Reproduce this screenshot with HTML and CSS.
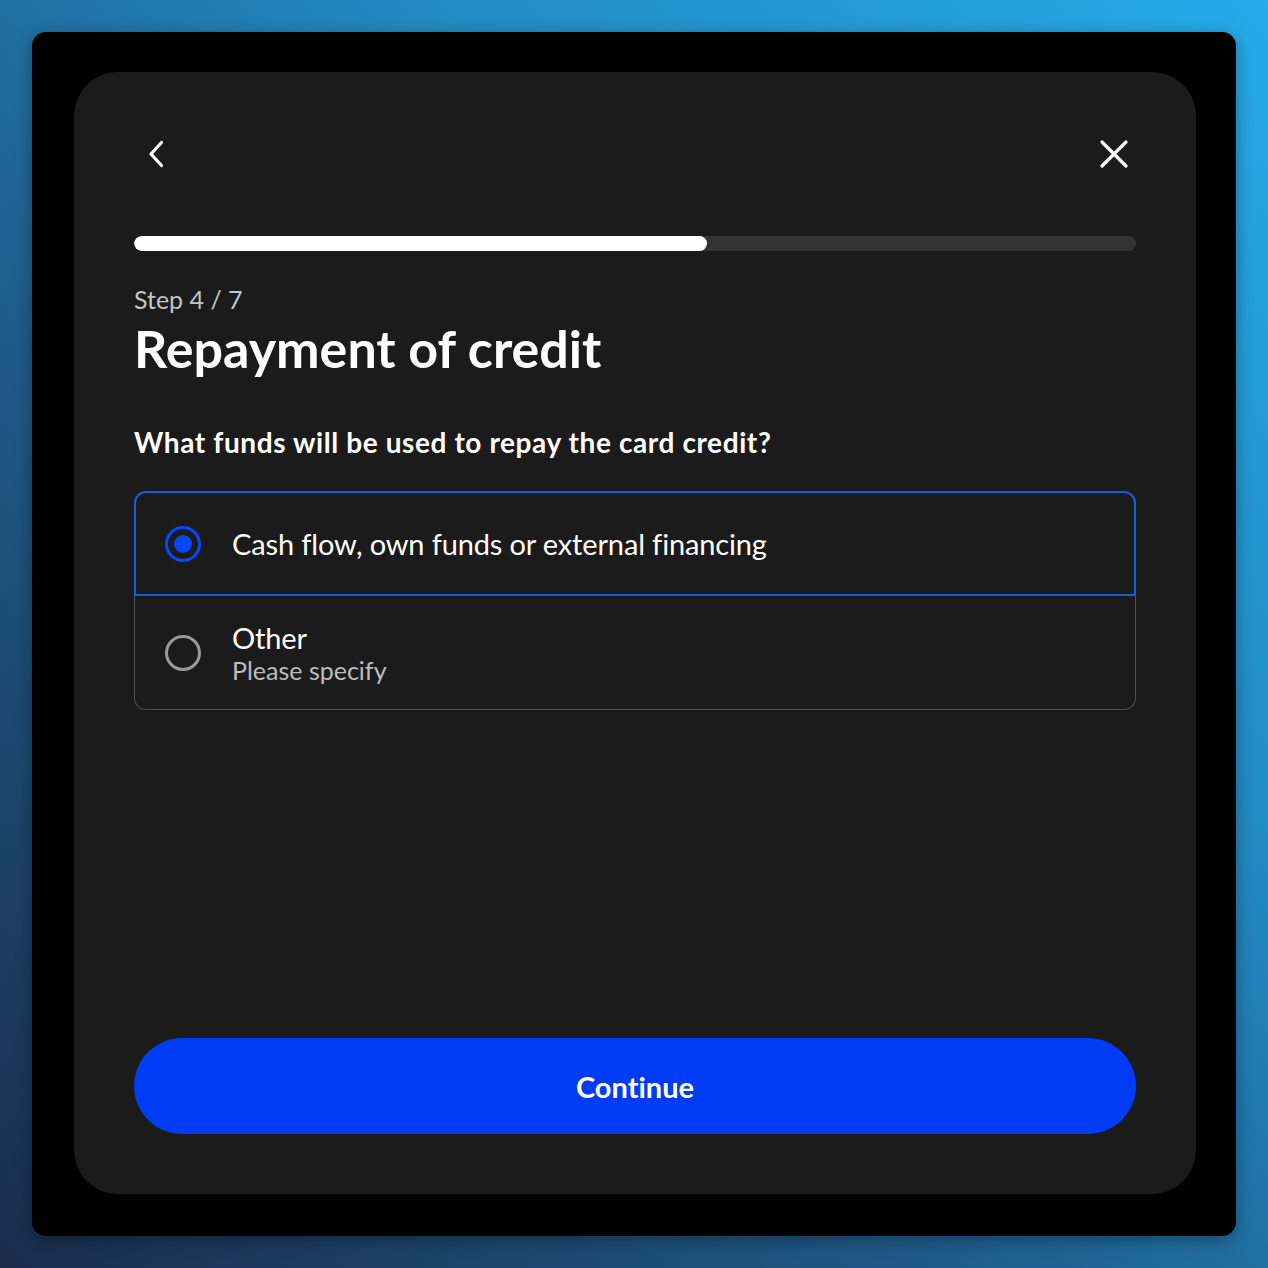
FILE: index.html
```html
<!DOCTYPE html>
<html lang="en">
<head>
<meta charset="utf-8">
<title>Repayment of credit</title>
<link rel="stylesheet" href="styles.css">
</head>
<body>
<div class="frame">
  <div class="card">
    <div class="header">
      <button class="icon-btn" aria-label="Back">
        <svg width="20" height="28" viewBox="0 0 20 28"><path d="M15.5 2.5 L5 14 L15.5 25.5" fill="none" stroke="#fff" stroke-width="3.2" stroke-linecap="round" stroke-linejoin="round"/></svg>
      </button>
      <button class="icon-btn" aria-label="Close">
        <svg width="30" height="30" viewBox="0 0 30 30"><path d="M3 3 L27 27 M27 3 L3 27" fill="none" stroke="#fff" stroke-width="3.2" stroke-linecap="round"/></svg>
      </button>
    </div>
    <div class="progress"><div class="progress-fill"></div></div>
    <div class="step">Step 4 / 7</div>
    <h1 class="title">Repayment of credit</h1>
    <p class="question">What funds will be used to repay the card credit?</p>
    <div class="options">
      <div class="option selected">
        <span class="radio on"><span class="dot"></span></span>
        <div class="opt-text">
          <div class="opt-label">Cash flow, own funds or external financing</div>
        </div>
      </div>
      <div class="option last">
        <span class="radio"></span>
        <div class="opt-text">
          <div class="opt-label">Other</div>
          <div class="opt-sub">Please specify</div>
        </div>
      </div>
    </div>
    <button class="continue">Continue</button>
  </div>
</div>
</body>
</html>
```
FILE: styles.css
```css
* { box-sizing: border-box; }
html, body { margin: 0; padding: 0; }
body {
  width: 1268px;
  height: 1268px;
  padding: 32px;
  font-family: Lato, "Open Sans", sans-serif;
  font-variant-ligatures: none;
  background: linear-gradient(to top right, #1a2c4a 0%, #1f5f8e 40%, #2288c0 65%, #25abe8 100%);
}
.frame {
  width: 1204px;
  height: 1204px;
  background: #000;
  border-radius: 14px;
  padding: 40px 40px 42px 42px;
  box-shadow: 0 4px 16px rgba(0,0,0,0.35);
}
.card {
  height: 100%;
  background: #1b1b1b;
  border-radius: 44px;
  padding: 60px;
  display: flex;
  flex-direction: column;
  color: #fff;
}
.header {
  height: 44px;
  display: flex;
  justify-content: space-between;
  align-items: center;
}
.icon-btn {
  width: 44px;
  height: 44px;
  border: none;
  background: transparent;
  padding: 0;
  display: flex;
  align-items: center;
  justify-content: center;
  cursor: pointer;
}
.progress {
  margin-top: 60px;
  height: 15px;
  border-radius: 8px;
  background: #333333;
  overflow: hidden;
}
.progress-fill {
  width: 57.2%;
  height: 100%;
  background: #fff;
  border-radius: 8px;
}
.step {
  margin-top: 33px;
  font-size: 25px;
  line-height: 30px;
  color: #c4c4c4;
}
.title {
  margin: 4px 0 0;
  font-size: 52px;
  line-height: 60px;
  font-weight: 700;
}
.question {
  margin: 47px 0 0;
  font-size: 28px;
  line-height: 34px;
  font-weight: 700;
  letter-spacing: 0.6px;
}
.options {
  margin-top: 32px;
  display: flex;
  flex-direction: column;
}
.option {
  display: flex;
  align-items: center;
  padding-left: 29px;
  gap: 31px;
}
.option.selected {
  height: 105px;
  border: 2px solid #1461d6;
  border-radius: 12px 12px 0 0;
}
.option.last {
  height: 114px;
  border: 1px solid #505050;
  border-top: none;
  border-radius: 0 0 12px 12px;
  padding-left: 30px;
}
.radio {
  flex: none;
  width: 36px;
  height: 36px;
  border-radius: 50%;
  border: 3px solid #9a9a9a;
  display: flex;
  align-items: center;
  justify-content: center;
}
.radio.on { border-color: #0a45ff; }
.radio .dot {
  width: 18px;
  height: 18px;
  border-radius: 50%;
  background: #0a45ff;
}
.opt-label {
  font-size: 29px;
  line-height: 34px;
  letter-spacing: -0.15px;
  color: #fff;
}
.opt-sub {
  font-size: 25px;
  line-height: 30px;
  color: #bdbdbd;
}
.continue {
  margin-top: auto;
  height: 96px;
  width: 100%;
  border: none;
  border-radius: 48px;
  background: #003cf5;
  color: #fff;
  font-family: inherit;
  font-size: 29px;
  font-weight: 700;
  font-variant-ligatures: none;
  cursor: pointer;
}
```
